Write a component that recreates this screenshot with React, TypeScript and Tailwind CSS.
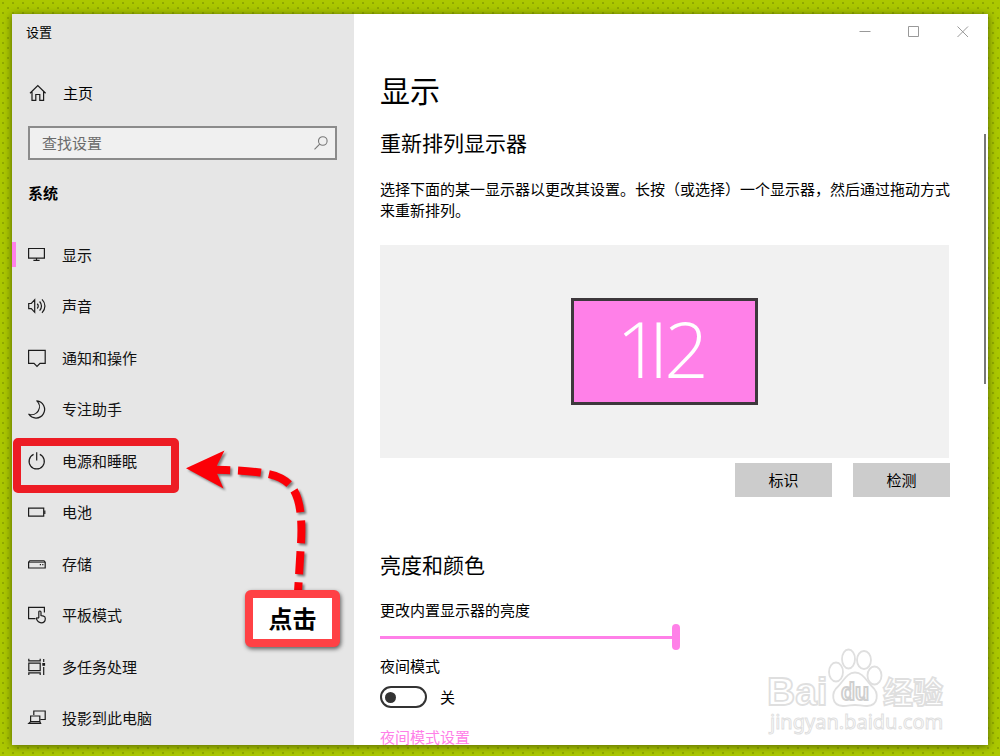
import type { ReactNode } from "react";

function Icon({ children }: { children: ReactNode }) {
  return (
    <svg
      width="18"
      height="18"
      viewBox="0 0 18 18"
      fill="none"
      stroke="#1c1c1c"
      strokeWidth="1.2"
      className="shrink-0 overflow-visible"
      aria-hidden="true"
    >
      {children}
    </svg>
  );
}

const items: { label: string; icon: ReactNode; active?: boolean; marked?: boolean }[] = [
  {
    label: "显示",
    active: true,
    icon: <path d="M.6 2.500h15.800v9.600H.6zM8.500 12.100v2.100M5.400 14.400h6.200" />,
  },
  {
    label: "声音",
    icon: (
      <path d="M.7 6.500v5.200h2.600l3.400 3.600V2.700L3.300 6.500zM9.200 6.700c1.400 1.300 1.400 3.500 0 4.800M11.600 4.500c2.500 2.600 2.500 6.600 0 9.200M14 2.300c3.900 3.900 3.900 9.700 0 13.600" />
    ),
  },
  { label: "通知和操作", icon: <path d="M.6 1.300h16.600v13H12l-3 3-3-3H.6z" /> },
  {
    label: "专注助手",
    icon: <path d="M8.800.9a7.900 7.900 0 0 1-8 13.300A8.600 8.600 0 1 0 8.800.9z" strokeLinejoin="round" />,
  },
  {
    label: "电源和睡眠",
    marked: true,
    icon: <path d="M5.600 2.400a7.600 7.600 0 1 0 6.200 0M8.700.2v8.400" />,
  },
  {
    label: "电池",
    icon: (
      <>
        <path d="M.6 5.200h15.100v8H.6z" />
        <path d="M16.800 7.500v3.400" />
      </>
    ),
  },
  {
    label: "存储",
    icon: (
      <>
        <path d="M.6 7.200l1.200-1.400h14.200l1.200 1.400v5.800H.6z" />
        <path d="M.6 7.400h16.600" strokeWidth=".7" />
        <path d="M11.800 9.700h1.200M14.200 9.700h1.200" />
      </>
    ),
  },
  {
    label: "平板模式",
    icon: (
      <>
        <path d="M7.500 12.600H.6V1.300h15.800v5.200" />
        <path
          d="M10.800 11.400V6.200c0-1.600 2.200-1.600 2.200 0v3.400l2.600.6c1.300.3 1.700 1 1.700 2.200 0 2.800-1.400 4.400-4.200 4.400-2.400 0-3.600-1.300-4.600-3.700-.4-1.200.8-1.700 1.500-1z"
          fill="#e6e6e6"
        />
      </>
    ),
  },
  {
    label: "多任务处理",
    icon: (
      <>
        <path d="M.8 5.200h11.400v7.400H.8zM.8.800v2h11.400v-2M.8 16.900v-2h11.400v2M15.700 1v3M15.700 9v8" />
        <path d="M14.300 5h2.800v2.800h-2.800z" fill="#1c1c1c" stroke="none" />
      </>
    ),
  },
  {
    label: "投影到此电脑",
    icon: (
      <>
        <path d="M5.800 6V2h11.400v8.500h-4.900" />
        <path d="M2.600 7h9.200v5.600H2.600zM2.600 12.600.8 14.400h11.800l-.8-1.800" />
      </>
    ),
  },
];

function NavItem({ label, icon, active, marked }: (typeof items)[number]) {
  return (
    <li className="relative flex flex-1">
      <a href="#" className="flex flex-1 items-center gap-4 pl-4 text-[15px] text-[#111]">
        <Icon>{icon}</Icon>
        <span>{label}</span>
      </a>
      {active && <span className="absolute top-[13px] left-0 h-[25px] w-1 bg-[#ff80e8]" />}
      {marked && (
        <span className="absolute top-[3px] left-px h-[55px] w-[166px] rounded-[5px] border-8 border-[#ed1c24]" />
      )}
    </li>
  );
}

function Callout() {
  return (
    <>
      <svg
        className="absolute top-[416px] left-[158px] drop-shadow-[2px_2px_1px_rgba(0,0,0,0.45)]"
        width="150"
        height="162"
        viewBox="0 0 150 162"
        fill="none"
        aria-hidden="true"
      >
        <path
          d="M37 39.500C60 40 72 40.500 90 42.500C105 44.500 113 48 119 54C126 61 129 70 130.500 83C132 96 131.500 108 130.500 121L128 162"
          stroke="#fb0007"
          strokeWidth="8"
          strokeDasharray="23 8"
        />
        <path d="M16 38.300 54.500 20.500 47 35.500V43.500L53.500 58.500z" fill="#fb0007" />
      </svg>
      <div className="absolute top-[576px] left-[233px] flex h-[57px] w-[95px] items-center justify-center rounded-md border-8 border-[#ff4145] bg-white pb-[2px] text-2xl font-bold text-black shadow-[1px_2px_4px_rgba(0,0,0,0.6)]">
        点击
      </div>
    </>
  );
}

function Sidebar() {
  return (
    <aside className="relative flex w-[342px] shrink-0 flex-col bg-[#e6e6e6]">
      <div className="flex h-9 shrink-0 items-center pl-[14px] text-[13px]">设置</div>
      <a href="#" className="mt-[21px] flex h-11 shrink-0 items-center gap-4 pl-[17px] text-[15px]">
        <Icon>
          <path d="M1 9.300 8.800 1.600l7.800 7.700M3 7.700v8.600h3.800v-5.800h4v5.800h3.800V7.700" />
        </Icon>
        <span>主页</span>
      </a>
      <label className="mt-[11px] mr-[17px] ml-4 flex h-[34px] shrink-0 items-center border-2 border-[#8b8b8b] bg-[#f0f0f0] pr-[7px] pl-3">
        <input
          type="text"
          aria-label="查找设置"
          placeholder="查找设置"
          className="min-w-0 flex-1 bg-transparent text-[15px] outline-none placeholder:text-[#6b6b6b]"
        />
        <svg width="14" height="14" viewBox="0 0 14 14" fill="none" stroke="#777" strokeWidth="1.1" aria-hidden="true">
          <circle cx="8.800" cy="5" r="4.300" />
          <path d="M5.700 8.100.5 13.300" />
        </svg>
      </label>
      <h2 className="mt-[23px] pl-4 text-[15px] leading-5 font-bold">系统</h2>
      <nav className="mt-[26px] flex flex-1 flex-col pb-px">
        <ul className="flex flex-1 flex-col">
          {items.map((item) => (
            <NavItem key={item.label} {...item} />
          ))}
        </ul>
      </nav>
      <Callout />
    </aside>
  );
}

function WindowControls() {
  return (
    <div className="flex h-9 shrink-0 justify-end pr-px">
      <button aria-label="最小化" className="flex w-[49px] items-center justify-center">
        <svg width="12" height="12" fill="none" stroke="#999">
          <path d="M.5 5.500h11" />
        </svg>
      </button>
      <button aria-label="最大化" className="flex w-[49px] items-center justify-center">
        <svg width="12" height="12" fill="none" stroke="#999">
          <path d="M.5 .5h10v10h-10z" />
        </svg>
      </button>
      <button aria-label="关闭" className="flex w-[49px] items-center justify-center">
        <svg width="12" height="12" fill="none" stroke="#999">
          <path d="m.5.5 10.500 10.500M11 .5.5 11" />
        </svg>
      </button>
    </div>
  );
}

function Watermark() {
  return (
    <svg
      className="absolute right-[38px] bottom-[6px] overflow-visible"
      width="184"
      height="92"
      viewBox="0 0 184 92"
      fill="#fff"
      stroke="#dfdfdf"
      strokeWidth="1.8"
    >
      <g fontFamily="Liberation Sans, Arial, sans-serif" fontWeight="700">
        <text x="1" y="58" fontSize="39">
          Bai
        </text>
        <ellipse cx="70" cy="25" rx="7" ry="9.500" />
        <ellipse cx="82.500" cy="12" rx="6.500" ry="9.500" />
        <ellipse cx="98" cy="13" rx="7" ry="9" />
        <ellipse cx="108.500" cy="28.500" rx="7" ry="9" />
        <path d="M89 25.500c8 0 11 8 17 14 7 6 7 19-5 19.500-5 0-8-1-12-1s-7 1-12 1c-12-.5-12-13.500-5-19.500 6-6 9-14 17-14z" />
        <text x="75" y="53" fontSize="23" stroke="#cfcfcf">
          du
        </text>
      </g>
      <text x="117" y="56" fontSize="30" fontWeight="700" fontFamily="Noto Sans CJK SC, sans-serif">
        经验
      </text>
      <text x="4" y="82" fontSize="20" strokeWidth="1" fontFamily="Noto Sans, sans-serif">
        jingyan.baidu.com
      </text>
    </svg>
  );
}

function DisplayPage() {
  return (
    <main className="relative flex min-w-0 flex-1 flex-col overflow-hidden bg-white">
      <WindowControls />
      <div className="flex flex-col pr-[38px] pl-[26px] text-[15px] leading-5">
        <h1 className="mt-[19px] text-[30px] leading-10">显示</h1>
        <h2 className="mt-[17px] text-[21px] leading-8">重新排列显示器</h2>
        <p className="mt-5 leading-[21px]">
          选择下面的某一显示器以更改其设置。长按（或选择）一个显示器，然后通过拖动方式来重新排列。
        </p>
        <div className="mt-[25px] mr-px flex h-[213px] items-center justify-center bg-[#f1f1f1]">
          <div className="flex h-[107px] w-[187px] items-center justify-center border-[3px] border-[#3d383c] bg-[#ff80e8] pr-1 pb-2 font-['Open_Sans','Noto_Sans',sans-serif] text-[78px] leading-none font-light text-white">
            <span>1</span>
            <span className="-mr-1 -ml-3">I</span>
            <span>2</span>
          </div>
        </div>
        <div className="mt-[5px] flex justify-end gap-[21px]">
          <button className="h-[34px] w-[97px] bg-[#ccc]">标识</button>
          <button className="h-[34px] w-[97px] bg-[#ccc]">检测</button>
        </div>
        <h2 className="mt-[51px] text-[21px] leading-8">亮度和颜色</h2>
        <label htmlFor="brightness" className="mt-5">
          更改内置显示器的亮度
        </label>
        <input
          id="brightness"
          type="range"
          defaultValue={100}
          className="mt-1 h-[26px] w-[300px] appearance-none bg-transparent [&::-webkit-slider-runnable-track]:h-[3px] [&::-webkit-slider-runnable-track]:bg-[#ff80e8] [&::-webkit-slider-thumb]:-mt-3 [&::-webkit-slider-thumb]:h-[26px] [&::-webkit-slider-thumb]:w-2 [&::-webkit-slider-thumb]:appearance-none [&::-webkit-slider-thumb]:rounded-full [&::-webkit-slider-thumb]:bg-[#ff80e8]"
        />
        <label htmlFor="night" className="mt-[6px]">
          夜间模式
        </label>
        <div className="mt-[10px] flex items-center gap-[13px]">
          <input
            id="night"
            type="checkbox"
            role="switch"
            className="flex h-[22px] w-[47px] appearance-none items-center rounded-full border-2 border-[#333] pl-[3px] before:size-[11px] before:rounded-full before:bg-[#333] checked:justify-end checked:pr-[3px]"
          />
          <span>关</span>
        </div>
        <a href="#" className="mt-[19px] text-[#ff80e8]">
          夜间模式设置
        </a>
      </div>
      <div className="absolute top-[120px] right-[2px] h-[250px] w-[2px] bg-[#777]" />
      <Watermark />
    </main>
  );
}

export default function App() {
  return (
    <div className="flex h-screen bg-[#acc800] bg-[radial-gradient(circle_at_3px_3px,#869f00_0.6px,transparent_1px),radial-gradient(circle_at_8px_8px,#869f00_0.6px,transparent_1px)] bg-size-[10px_10px] px-3 pt-[14px] pb-[11px] font-['Noto_Sans_CJK_SC',sans-serif] text-black">
      <div className="flex min-w-0 flex-1 overflow-hidden shadow-[0_1px_8px_rgba(50,60,0,0.75)]">
        <Sidebar />
        <DisplayPage />
      </div>
    </div>
  );
}
